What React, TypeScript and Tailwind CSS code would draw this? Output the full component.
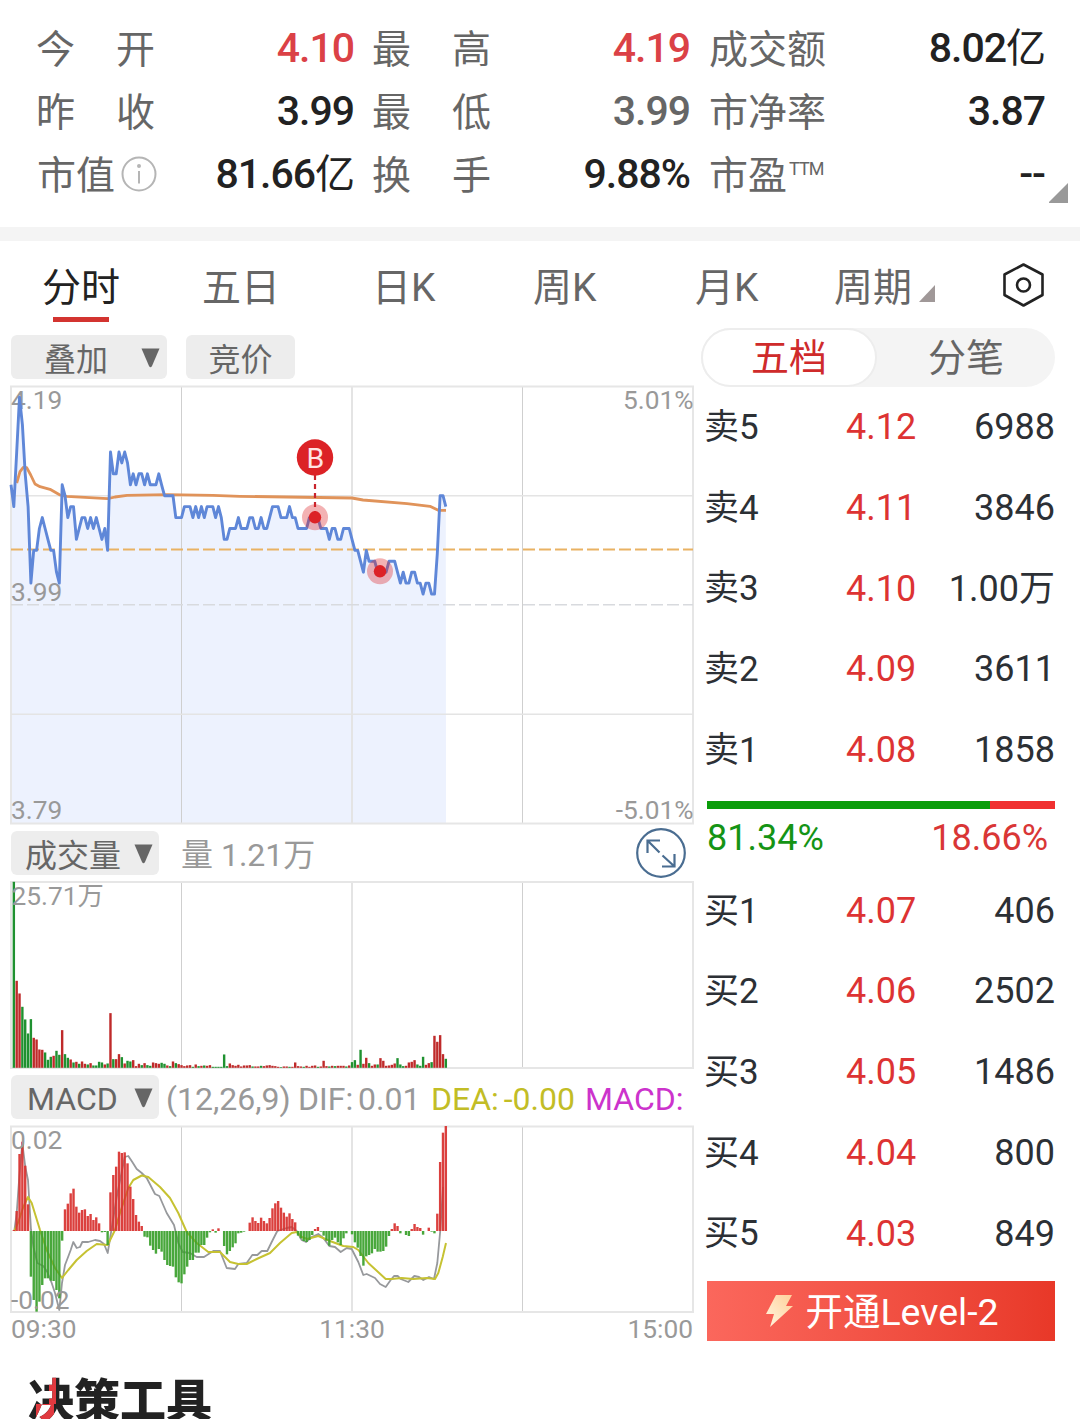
import type { ReactNode } from "react";

const STEP = 2.842;
const xAt = (i: number) => 11 + STEP * i;

// minute prices in ticks of 0.01 above the previous close
const prices = [
  11, 9, 14, 19, 16.5, 12, 9, 2, 5, 5, 7, 8, 7, 6, 5, 5, 3, 2, 11, 10,
  8, 9, 9, 6, 7, 8, 8, 7, 8, 7, 8, 7, 6, 7, 5, 14, 12, 12, 14, 13,
  14, 13, 11, 12, 11, 12, 12, 11, 12, 11, 11, 11, 12, 11, 10, 10, 10, 10, 8, 8,
  8, 9, 9, 9, 8, 9, 8, 9, 8, 9, 9, 9, 8, 9, 8, 6, 6, 7, 7, 7,
  8, 7, 7, 7, 8, 8, 7, 7, 8, 7, 7, 8, 9, 9, 9, 8, 8, 8, 9, 8,
  8, 7, 7, 7, 7, 8, 8, 8, 8, 7, 7, 7, 6, 7, 7, 6, 6, 7, 7, 7,
  6, 5, 5, 4, 3, 5, 4, 4, 4, 3, 3, 3, 3, 4, 4, 4, 3, 2, 3, 2,
  2, 3, 3, 2, 2, 1, 2, 2, 1, 1, 4.7, 10, 10, 9,
];

// volume per minute, negative = green
const volumes = [
  0, -558, 261, 223, -183, -145, -103, -146, 90, 85, 55, 54, -46, -24, -33, 36, -51, -39, 113, -41,
  -30, 25, -16, 18, -12, 19, 12, -10, 14, -7, -7, -18, -16, 10, -13, 164, -26, 26, 41, -32,
  13, -21, -19, 23, 5, 12, -8, 14, -8, -6, 16, 14, 12, -15, -12, 7, -5, 19, -14, 11,
  8, 5, 7, 8, -3, 10, -5, 6, -7, 6, 8, -3, -3, -3, -3, -40, -5, 13, 8, 6,
  9, 4, 7, 7, 8, -4, 4, 4, -6, 5, 7, 8, 6, 5, 3, -2, 4, 4, -3, 3,
  16, 5, 4, -3, 6, 3, 6, 7, -3, 4, 21, 5, -4, 6, -5, 6, 6, 6, -4, 7,
  -17, -23, 9, -54, 12, 30, -14, 6, 10, -10, 29, 21, 6, 7, 9, 13, -29, -10, -5, 6,
  16, 18, 23, -10, -6, -33, 9, 14, -17, 96, 78, 98, 41, -27,
];

const macd = [
  0, 3, 60, 231, 268, 196, 80, -137, -207, -242, -212, -162, -142, -142, -149, -150, -177, -202, -29, 65,
  82, 113, 127, 73, 55, 63, 65, 45, 51, 33, 41, 23, -4, -3, -42, 116, 168, 193, 238, 234,
  236, 203, 133, 96, 48, 28, 15, -17, -19, -44, -57, -68, -54, -62, -87, -102, -105, -107, -139, -154,
  -157, -130, -107, -87, -87, -65, -65, -42, -42, -20, -4, 5, -5, 8, 0, -45, -70, -60, -49, -37,
  -7, -5, -2, 0, 25, 41, 30, 24, 40, 30, 23, 39, 68, 83, 90, 70, 55, 43, 53, 36,
  26, -14, -22, -30, -33, -27, -12, 6, 12, -2, -14, -29, -44, -27, -20, -34, -42, -22, -7, 0,
  -10, -34, -50, -75, -104, -76, -72, -67, -54, -62, -62, -60, -47, -15, 6, 23, 15, -7, 0, -12,
  -15, 6, 21, 12, 9, -11, 0, 10, -2, -7, 52, 207, 295, 315,
];

const average =
  "M16.7 483 L20 471.7 L23.3 467.3 L26.7 467.7 L30.7 475 L35 484 L40 486.7 L50 489.3 L60 495 L66.7 496.3 L107.7 498.7 L115 497 L127 495.3 L167 494.7 L213 495.3 L240 496.3 L352 498 L363 500 L407 503.7 L430 506.3 L438.3 510.3 L446 510.3";

const dif =
  "M14.3 1231 L16.7 1213 L19.3 1177 L22.3 1143 L25.3 1167 L28 1180 L31 1230 L33.7 1248 L37.3 1263 L43.3 1266 L47.3 1272 L51.7 1283 L55 1293 L59.3 1310 L62 1283 L65 1265 L67.7 1258 L70.7 1250 L73.3 1242 L76.7 1248 L80 1247 L82.3 1242 L88.3 1242 L95 1240 L100 1241 L104 1244 L107.7 1253 L110.3 1237 L116.7 1197 L124.7 1157 L128.3 1156 L132.3 1162 L136.7 1169 L141.7 1173 L146.7 1178 L155 1194 L159.3 1196 L166.7 1213 L174 1225 L178.3 1243 L182.7 1252 L190 1253 L196.7 1257 L204 1257 L213.3 1251 L220 1251 L226.7 1268 L235 1269 L238.3 1264 L246.7 1263 L252.3 1255 L257.3 1255 L261.7 1251 L267.3 1251 L271.7 1242 L277.3 1231 L286.7 1228 L291.7 1227 L296.7 1231 L301.7 1240 L306 1242 L311.7 1237 L318.3 1234 L323.3 1238 L329.3 1246 L335 1247 L340.7 1252 L346.7 1248 L351.7 1249 L358.3 1262 L363.3 1275 L366.7 1274 L375 1278 L380 1284 L385.7 1287 L390.7 1280 L394 1276 L397.7 1276 L400.7 1279 L408.3 1282 L414.3 1276 L419 1277 L423.3 1280 L429 1277 L434 1279 L437.3 1263 L440.3 1230 L443 1187";

const dea =
  "M14.3 1231 L18.3 1222 L23.3 1207 L28 1197 L31.7 1203 L40 1230 L46.7 1250 L55 1268 L62 1278 L68.3 1270 L76.7 1260 L86.7 1251 L96.7 1244 L107.7 1245 L115 1230 L120 1213 L128.3 1188 L133.3 1180 L141.7 1175.5 L148.3 1177 L160 1187 L170 1198 L178.3 1213 L186.7 1232 L196.7 1243 L208.3 1252 L220 1252 L230 1262 L238.3 1264 L246.7 1264 L256.7 1259 L270 1253 L280 1243 L291.7 1233 L296.7 1232 L301.7 1237 L307.3 1239 L318.3 1236 L330 1241 L343.3 1246 L353.3 1247 L358.3 1250 L368.3 1263 L385.7 1279 L391.7 1279 L401.7 1278 L413.3 1279 L426.7 1278 L435 1279 L438.3 1273 L442.7 1257 L446 1243";

const sells = [
  ["卖5", "4.12", "6988"],
  ["卖4", "4.11", "3846"],
  ["卖3", "4.10", "1.00万"],
  ["卖2", "4.09", "3611"],
  ["卖1", "4.08", "1858"],
];

const buys = [
  ["买1", "4.07", "406"],
  ["买2", "4.06", "2502"],
  ["买3", "4.05", "1486"],
  ["买4", "4.04", "800"],
  ["买5", "4.03", "849"],
];

interface statProps {
  label: ReactNode;
  value: string;
  unit?: string;
  tone?: string;
}
const Stat = ({ label, value, unit, tone = "text-[#222]" }: statProps) => (
  <div className="flex h-[63px] items-center justify-between">
    <span className="flex items-center pt-[3px] text-[39px] text-[#666]">{label}</span>
    <span className={`text-[41px] font-medium tracking-[-1px] ${tone}`}>
      {value}
      {unit && <span className="text-[40px] font-normal">{unit}</span>}
    </span>
  </div>
);

const Spread = ({ text }: { text: string }) => (
  <span className="-ml-px flex w-[119px] justify-between">
    <span>{text[0]}</span>
    <span>{text[1]}</span>
  </span>
);

const Info = () => (
  <svg className="-mt-[5px] ml-[6px] h-9 w-9" viewBox="0 0 36 36" fill="none" stroke="#b5b5b5" strokeWidth="2">
    <circle cx="18" cy="18" r="16.5" />
    <path d="M18 15v12.5" />
    <circle cx="18" cy="10" r="1" fill="#b5b5b5" stroke="#b5b5b5" />
  </svg>
);

const Down = () => (
  <svg className="mt-[2px] h-5 w-[19px]" viewBox="0 0 19 20">
    <path d="M0.5 0.5h18L11 18q-1.500 2.500-3 0z" fill="#666" />
  </svg>
);

const Grid = ({ top, height }: { top: number; height: number }) => (
  <g fill="none">
    <path d={`M181.500 ${top}v${height}M522.500 ${top}v${height}`} stroke="#cfcfcf" />
    <path d={`M352 ${top}v${height}`} stroke="#e4e4e4" strokeWidth="2" />
    <rect x="11" y={top} width="682" height={height} stroke="#e6e6e6" strokeWidth="2" />
  </g>
);

const PriceChart = () => {
  const line = prices
    .map((p, i) => `${xAt(i).toFixed(1)},${(605 - p * 10.93).toFixed(1)}`)
    .join(" ");
  return (
    <svg className="block h-[438px] w-[682px] overflow-visible" viewBox="11 386 682 438">
      <polygon points={`11,824 ${line} 446,824`} fill="#edf2fe" />
      <Grid top={386.5} height={437} />
      <path d="M11 495.700h682M11 714.300h682" stroke="#e4e4e4" strokeWidth="1.500" />
      <path d="M11 604.700h682" stroke="#d8dade" strokeWidth="1.500" strokeDasharray="12 4" />
      <path d="M11 549.500h682" stroke="#e9b263" strokeWidth="2" strokeDasharray="12 4" />
      <g fill="#999" fontSize="26.300">
        <text x="11" y="409">4.19</text>
        <text x="11" y="601">3.99</text>
        <text x="11" y="819">3.79</text>
        <text x="693.500" y="409" textAnchor="end">5.01%</text>
        <text x="693.500" y="819" textAnchor="end">-5.01%</text>
      </g>
      <path d={average} fill="none" stroke="#e0935a" strokeWidth="2.800" strokeLinejoin="round" />
      <polyline points={line} fill="none" stroke="#5f87d8" strokeWidth="2.900" strokeLinejoin="round" />
      <path d="M315 475v40" stroke="#c9252d" strokeWidth="2.200" strokeDasharray="5 4" />
      <circle cx="315" cy="457.500" r="18.200" fill="#dc2226" />
      <text x="315.300" y="467.500" fill="#ffe4e4" fontSize="28.500" textAnchor="middle">B</text>
      {[[315, 517.3], [380, 571.3]].map(([cx, cy]) => (
        <g key={cx} fill="#dc2226">
          <circle cx={cx} cy={cy} r="13" opacity="0.350" />
          <circle cx={cx} cy={cy} r="6.200" />
        </g>
      ))}
    </svg>
  );
};

const VolumeChart = () => (
  <svg className="block h-[186px] w-[682px] overflow-visible" viewBox="11 882 682 186">
    <Grid top={882} height={186} />
    {volumes.map((v, i) => (
      <rect
        key={i}
        x={xAt(i) - 1.2}
        y={1067.8 - Math.abs(v) / 3}
        width="2.400"
        height={Math.abs(v) / 3}
        fill={v < 0 ? "#1f9130" : "#bf2a2a"}
      />
    ))}
    <text x="11.500" y="905" fill="#999" fontSize="26.300">25.71万</text>
  </svg>
);

const MacdChart = () => (
  <svg className="block h-[186px] w-[682px] overflow-visible" viewBox="11 1126 682 186">
    <Grid top={1126.5} height={185.5} />
    <path d={dif} fill="none" stroke="#97999c" strokeWidth="1.800" strokeLinejoin="round" />
    <path d={dea} fill="none" stroke="#c6c232" strokeWidth="2" strokeLinejoin="round" />
    {macd.map((v, i) => (
      <rect
        key={i}
        x={xAt(i) - 1.2}
        y={v > 0 ? 1231 - v / 3 : 1231}
        width="2.400"
        height={Math.abs(v) / 3}
        fill={v < 0 ? "#3aa02c" : "#d8322f"}
        opacity="0.930"
      />
    ))}
    <g fill="#999" fontSize="26.300">
      <text x="11" y="1149">0.02</text>
      <text x="11" y="1309">-0.02</text>
    </g>
  </svg>
);

const Row = ({ row }: { row: string[] }) => (
  <div className="grid h-[80.700px] grid-cols-[142px_70px_1fr] items-center text-[36px] text-[#2c3035]">
    <span className="pt-[2px] text-[35px]">{row[0]}</span>
    <span className="text-[#dd3333]">{row[1]}</span>
    <span className="text-right">{row[2]}</span>
  </div>
);

const Tab = ({ text, left }: { text: string; left: string }) => (
  <span className={`${left} whitespace-nowrap`}>{text}</span>
);

export default function App() {
  return (
    <div className="h-[1419px] w-[1080px] overflow-hidden bg-white font-['Roboto','Noto_Sans_CJK_SC',sans-serif]">
      <header className="relative grid h-[227px] grid-cols-[317px_317px_336px] content-start gap-x-[19px] pt-[17px] pl-[37px]">
        <Stat label={<Spread text="今开" />} value="4.10" tone="text-[#db4146]" />
        <Stat label={<Spread text="最高" />} value="4.19" tone="text-[#db4146]" />
        <Stat label="成交额" value="8.02" unit="亿" />
        <Stat label={<Spread text="昨收" />} value="3.99" />
        <Stat label={<Spread text="最低" />} value="3.99" tone="text-[#666]" />
        <Stat label="市净率" value="3.87" />
        <Stat label={<>市值<Info /></>} value="81.66" unit="亿" />
        <Stat label={<Spread text="换手" />} value="9.88%" />
        <Stat
          label={<>市盈<span className="mb-4 ml-[2px] text-[18px] tracking-[-1px]">TTM</span></>}
          value="--"
        />
        <svg className="absolute top-[183px] left-[1049px] h-5 w-[19px]" viewBox="0 0 19 20">
          <path d="M19 0v20H1q-2 0-0.500-1.500z" fill="#999" />
        </svg>
      </header>
      <div className="h-[14px] bg-[#f4f4f4]" />

      <nav className="flex h-[87px] items-start pt-[18px] text-[39px] leading-[58px] text-[#666]">
        <div className="ml-[42px] flex w-[78px] flex-col items-center text-[#222]">
          <span className="whitespace-nowrap">分时</span>
          <span className="h-[5px] w-14 bg-[#d33430]" />
        </div>
        <Tab text="五日" left="ml-[82px] w-[78px]" />
        <Tab text="日K" left="ml-[92px] w-[64px]" />
        <Tab text="周K" left="ml-[97px] w-[64px]" />
        <Tab text="月K" left="ml-[98px] w-[64px]" />
        <Tab text="周期" left="ml-[75px] w-[78px]" />
        <svg className="mt-[26px] ml-[7px] h-[17px] w-4" viewBox="0 0 16 17">
          <path d="M16 0v17H0z" fill="#a09898" />
        </svg>
        <svg
          className="mt-[2px] ml-[66px] h-[48px] w-[44px]"
          viewBox="0 0 44 48"
          fill="none"
          stroke="#222"
          strokeWidth="2.600"
          strokeLinejoin="round"
        >
          <path d="M22.500 3.500L41.500 13.500V34L22.500 44.500L3.500 34V13.500z" />
          <circle cx="22.500" cy="24" r="6.500" />
        </svg>
      </nav>

      <main className="flex h-[1030px] pl-[11px]">
        <section className="w-[682px]">
          <div className="flex h-[58px] items-center gap-[19px] text-[32px] text-[#666]">
            <div className="flex h-[44px] w-[156px] items-center justify-between rounded-md bg-[#ededed] pr-[7px] pl-[33px]">
              <span className="pt-[5px]">叠加</span>
              <Down />
            </div>
            <div className="flex h-[44px] w-[109px] items-center justify-center rounded-md bg-[#ededed] pt-[5px]">
              竞价
            </div>
          </div>
          <PriceChart />
          <div className="flex h-[58px] items-center text-[32px] text-[#999]">
            <div className="flex h-[44px] w-[148px] items-center justify-between rounded-md bg-[#ededed] pr-[6px] pl-[14px] text-[#666]">
              <span className="pt-[5px]">成交量</span>
              <Down />
            </div>
            <span className="ml-[22px] pt-[3px]">量 1.21万</span>
            <svg
              className="mr-[7px] ml-auto h-[50px] w-[50px]"
              viewBox="0 0 50 50"
              fill="none"
              stroke="#4a6d91"
              strokeWidth="2.200"
            >
              <circle cx="25" cy="25" r="23.800" />
              <path d="M24 12.500H11.500V25M11.500 12.500l12 12M38.500 26v12.500H26M38.500 38.500l-12-11" />
            </svg>
          </div>
          <VolumeChart />
          <div className="flex h-[58px] items-center whitespace-nowrap text-[32px] text-[#999]">
            <div className="flex h-[44px] w-[148px] items-center justify-between rounded-md bg-[#ededed] pr-[6px] pl-[16px] text-[#666]">
              <span className="pt-[3px]">MACD</span>
              <Down />
            </div>
            <span className="ml-[7px] w-[132px] pt-[3px]">(12,26,9)</span>
            <span className="w-[133px] pt-[3px] [word-spacing:-3px]">DIF: 0.01</span>
            <span className="w-[154px] pt-[3px] text-[#c2bd26] [word-spacing:-3px]">DEA: -0.00</span>
            <span className="pt-[3px] text-[#cc33cc]">MACD:</span>
          </div>
          <MacdChart />
          <div className="grid h-[34px] grid-cols-3 items-center text-[26.300px] leading-[28px] text-[#999]">
            <span>09:30</span>
            <span className="text-center">11:30</span>
            <span className="text-right">15:00</span>
          </div>
        </section>

        <aside className="ml-2 w-[354px]">
          <div className="flex h-[59px] rounded-full bg-[#f4f4f4] text-[38px] text-[#666]">
            <div className="flex w-[176px] items-center justify-center rounded-full border-2 border-[#ededed] bg-white pt-[2px] text-[#cf2b2b]">
              五档
            </div>
            <div className="flex flex-1 items-center justify-center pt-[2px]">分笔</div>
          </div>
          <div className="pl-[3px]">
            {sells.map((row) => (
              <Row key={row[0]} row={row} />
            ))}
          </div>
          <div className="mt-[11px] ml-[6px] flex h-2">
            <div className="h-full bg-[#0a9d0a]" style={{ width: "81.34%" }} />
            <div className="h-full flex-1 bg-[#f03030]" />
          </div>
          <div className="flex h-[61px] items-center justify-between pr-[7px] pb-[4px] pl-[6px] text-[36px]">
            <span className="text-[#159415]">81.34%</span>
            <span className="text-[#d93636]">18.66%</span>
          </div>
          <div className="pl-[3px]">
            {buys.map((row) => (
              <Row key={row[0]} row={row} />
            ))}
          </div>
          <button className="mt-[7px] ml-[6px] flex h-[60px] w-[348px] items-center justify-center bg-linear-to-r from-[#fb675c] to-[#e83828] pl-[3px] text-[37.500px] text-white">
            <svg className="mr-[12px] h-8 w-[27px]" viewBox="0 0 27 32">
              <defs>
                <linearGradient id="bolt" x1="0" y1="1" x2="1" y2="0">
                  <stop offset="0" stopColor="#fff6e0" />
                  <stop offset="1" stopColor="#ffd09a" />
                </linearGradient>
              </defs>
              <path d="M10 0h16l-6 11h7L4 32l4-13H0z" fill="url(#bolt)" />
            </svg>
            <span className="pt-[3px]">开通Level-2</span>
          </button>
        </aside>
      </main>

      <h2 className="mt-[12px] ml-[28px] w-[184px] bg-[linear-gradient(#e0393f,#e0393f),linear-gradient(#e0393f,#e0393f),linear-gradient(#222,#222)] bg-[length:7px_34px,18px_20px,100%_100%] bg-[position:21px_0px,8px_34px,0_0] bg-no-repeat bg-clip-text font-['Noto_Sans_CJK_SC',sans-serif] text-[46px] leading-[54px] font-black text-transparent">
        决策工具
      </h2>
    </div>
  );
}
